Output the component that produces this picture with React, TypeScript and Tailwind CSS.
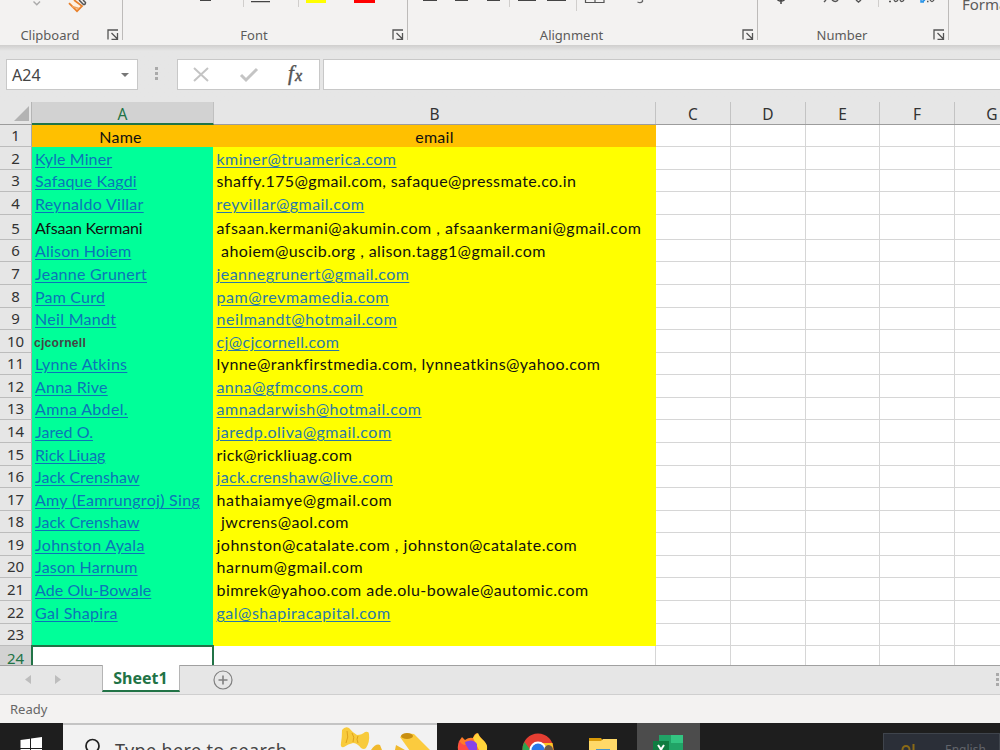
import { ReactNode } from 'react';

interface Row {
  name: string;
  email: string;
  height: string;
  // letter spacing of the two cells
  nt: string;
  et: string;
  nameLink?: boolean;
  emailLink?: boolean;
  small?: boolean;
}

const H22 = 'h-[22px]';
const H23 = 'h-[23px]';
const H25 = 'h-[25px]';

const rows: Row[] = [
  { name: 'Kyle Miner', email: 'kminer@truamerica.com', height: H23, nt: 'tracking-[0.1px]', et: 'tracking-[0.45px]', nameLink: true, emailLink: true },
  { name: 'Safaque Kagdi', email: 'shaffy.175@gmail.com, safaque@pressmate.co.in', height: H22, nt: 'tracking-[0.15px]', et: 'tracking-[0.38px]', nameLink: true },
  { name: 'Reynaldo Villar', email: 'reyvillar@gmail.com', height: H23, nt: 'tracking-[0.3px]', et: 'tracking-[0.45px]', nameLink: true, emailLink: true },
  { name: 'Afsaan Kermani', email: 'afsaan.kermani@akumin.com , afsaankermani@gmail.com', height: H25, nt: 'tracking-[-0.2px]', et: 'tracking-[0.5px]' },
  { name: 'Alison Hoiem', email: ' ahoiem@uscib.org , alison.tagg1@gmail.com', height: H22, nt: 'tracking-[0.2px]', et: 'tracking-[0.42px]', nameLink: true },
  { name: 'Jeanne Grunert', email: 'jeannegrunert@gmail.com', height: H23, nt: 'tracking-[0.25px]', et: 'tracking-[0.45px]', nameLink: true, emailLink: true },
  { name: 'Pam Curd', email: 'pam@revmamedia.com', height: H23, nt: 'tracking-[0.2px]', et: 'tracking-[0.56px]', nameLink: true, emailLink: true },
  { name: 'Neil Mandt', email: 'neilmandt@hotmail.com', height: H22, nt: 'tracking-[0.3px]', et: 'tracking-[0.56px]', nameLink: true, emailLink: true },
  { name: 'cjcornell', email: 'cj@cjcornell.com', height: H23, nt: 'tracking-[0.3px]', et: 'tracking-[0.35px]', small: true, emailLink: true },
  { name: 'Lynne Atkins', email: 'lynne@rankfirstmedia.com, lynneatkins@yahoo.com', height: H22, nt: 'tracking-[0.3px]', et: 'tracking-[0.43px]', nameLink: true },
  { name: 'Anna Rive', email: 'anna@gfmcons.com', height: H23, nt: 'tracking-[0.2px]', et: 'tracking-[0.42px]', nameLink: true, emailLink: true },
  { name: 'Amna Abdel.', email: 'amnadarwish@hotmail.com', height: H22, nt: 'tracking-[0.35px]', et: 'tracking-[0.56px]', nameLink: true, emailLink: true },
  { name: 'Jared O.', email: 'jaredp.oliva@gmail.com', height: H23, nt: 'tracking-[0.05px]', et: 'tracking-[0.5px]', nameLink: true, emailLink: true },
  { name: 'Rick Liuag', email: 'rick@rickliuag.com', height: H23, nt: 'tracking-[-0.05px]', et: 'tracking-[0.28px]', nameLink: true },
  { name: 'Jack Crenshaw', email: 'jack.crenshaw@live.com', height: H22, nt: 'tracking-[0.03px]', et: 'tracking-[0.33px]', nameLink: true, emailLink: true },
  { name: 'Amy (Eamrungroj) Sing', email: 'hathaiamye@gmail.com', height: H23, nt: 'tracking-[0.3px]', et: 'tracking-[0.56px]', nameLink: true },
  { name: 'Jack Crenshaw', email: ' jwcrens@aol.com', height: H22, nt: 'tracking-[0.03px]', et: 'tracking-[0.42px]', nameLink: true },
  { name: 'Johnston Ayala', email: 'johnston@catalate.com , johnston@catalate.com', height: H23, nt: 'tracking-[0.3px]', et: 'tracking-[0.5px]', nameLink: true },
  { name: 'Jason Harnum', email: 'harnum@gmail.com', height: H22, nt: 'tracking-[0.2px]', et: 'tracking-[0.56px]', nameLink: true },
  { name: 'Ade Olu-Bowale', email: 'bimrek@yahoo.com ade.olu-bowale@automic.com', height: H23, nt: 'tracking-[0.07px]', et: 'tracking-[0.45px]', nameLink: true },
  { name: 'Gal Shapira', email: 'gal@shapiracapital.com', height: H23, nt: 'tracking-[0.3px]', et: 'tracking-[0.5px]', nameLink: true, emailLink: true },
  { name: '', email: '', height: H22, nt: '', et: '' },
];

function Launcher() {
  return (
    <svg className="-mb-px h-3 w-3 shrink-0" viewBox="0 0 12 12" fill="none" stroke="#555" strokeWidth="1.3">
      <path d="M1 10.5V1h10M4.5 4l5.5 5.500M10.5 4v6.300H4.5" />
    </svg>
  );
}

function Group({ label, width, children }: { label: string; width: string; children?: ReactNode }) {
  return (
    <div className={`relative flex h-full shrink-0 items-end ${width}`}>
      {children}
      <div className="flex h-[41px] w-full items-end border-r border-[#bdbbb9] pr-[3px]">
        <span className="-mb-1 flex-1 pr-[7px] text-center text-[13px] leading-[18px] text-[#5c5b5a]">{label}</span>
        <Launcher />
      </div>
    </div>
  );
}

function Ribbon() {
  return (
    <div className="flex h-[45px] shrink-0 overflow-hidden bg-[#f3f2f1] pb-[5px]">
      <Group label="Clipboard" width="w-[123px]">
        <svg className="absolute left-0 top-0 h-4 w-[123px]" viewBox="0 0 123 16" fill="none">
          <path d="M33.5 1.5l3.3 3.3L40 1.5" stroke="#aaa" strokeWidth="1.4" />
          <path d="M69 3.2l8 8 5-5.200L74 0" fill="#fdf0e2" stroke="#e8812b" strokeWidth="1.8" />
          <path d="M72 6.500l7 2" stroke="#f0a25c" strokeWidth="1.6" />
          <path d="M79 0l4.500 4.500q2 .3 2-2L83 0" stroke="#555" strokeWidth="1.5" />
        </svg>
      </Group>
      <Group label="Font" width="w-[285px]">
        <svg className="absolute left-0 top-0 h-4 w-[285px]" viewBox="123 0 285 16">
          <path d="M200 .3h11M251 1.600h19" stroke="#444" strokeWidth="1.4" />
          <path d="M243.500 0v7M298.500 0v7" stroke="#d0cecc" />
          <path d="M306 0h20v3h-20z" fill="#ff0" />
          <path d="M354 0h21v3h-21z" fill="#f00" />
        </svg>
      </Group>
      <Group label="Alignment" width="w-[350px]">
        <svg className="absolute left-0 top-0 h-4 w-[350px]" viewBox="408 0 350 16" fill="none">
          <path d="M423 .3h14M455 .3h13M487 .3h13M518 .3h18M547 .3h19" stroke="#444" strokeWidth="1.4" />
          <path d="M509.500 0v7M576.500 0v11" stroke="#d0cecc" />
          <path d="M585.500 0v2.500h18.500v-2.500M595 0v2.500" stroke="#555" strokeWidth="1.2" />
          <path d="M637.500 2q3 1.500 5-.5V0" stroke="#666" strokeWidth="1.3" />
        </svg>
      </Group>
      <Group label="Number" width="w-[191px]">
        <svg className="absolute left-0 top-0 h-4 w-[191px]" viewBox="758 0 191 16" fill="none">
          <path d="M777.500 0q3.500 2.500 7 0M781 0v4" stroke="#444" strokeWidth="1.5" />
          <path d="M826 0l-2 2M832 0q3.500 3 6 0M856 0l2.500 2 2.500-2" stroke="#555" strokeWidth="1.4" />
          <path d="M878.500 0v7" stroke="#d0cecc" />
          <path d="M889 1.500h2M894 0q1.500 3 4 0M900 0q1.500 3 4 0M927 1.500h1.500M930 0q2 3 4 0" stroke="#555" strokeWidth="1.3" />
          <path d="M921 2l4-2M921 0v2h3" stroke="#2b95e8" strokeWidth="1.5" />
        </svg>
      </Group>
      <div className="-mt-[6px] ml-[13px] whitespace-nowrap text-[15px] leading-5 text-[#5c5b5a]">Format</div>
    </div>
  );
}

function FormulaBar() {
  return (
    <div className="flex h-[57px] shrink-0 bg-linear-to-b from-[#cfcecd] to-[#e6e6e6] to-[6px] pt-[14px]">
      <div className="ml-[6px] flex h-[31px] w-[132px] items-center justify-between border border-[#c8c8c8] bg-white pl-[5px] pr-2 text-[16px] text-[#444]">
        A24
        <svg className="h-1 w-2" viewBox="0 0 8 4"><path d="M0 0h8L4 4z" fill="#777" /></svg>
      </div>
      <svg className="ml-[16px] mt-[7px] h-4 w-[5px]" viewBox="0 0 5 16" fill="#aaa">
        <path d="M1 1h3v3H1zM1 6h3v3H1zM1 11h3v3H1z" />
      </svg>
      <div className="ml-[18px] flex h-[31px] w-[143px] border border-[#c8c8c8] bg-white">
        <svg className="h-[29px] w-[140px]" viewBox="0 0 140 29" fill="none">
          <path d="M16 8l14 13M30 8L16 21" stroke="#c4c4c4" strokeWidth="2" />
          <path d="M63 15l5 5 11-11" stroke="#c4c4c4" strokeWidth="3" />
          <text x="110" y="20" fontFamily="Liberation Serif, serif" fontStyle="italic" fontSize="21" fill="#555" stroke="#555" strokeWidth=".4">f</text>
          <text x="117" y="20.500" fontFamily="Liberation Serif, serif" fontStyle="italic" fontSize="16" fill="#555" stroke="#555" strokeWidth=".5">x</text>
        </svg>
      </div>
      <div className="ml-[3px] h-[31px] flex-1 border border-r-0 border-[#c8c8c8] bg-white" />
    </div>
  );
}

const EMPTY = ['C', 'D', 'E', 'F', 'G'];
const emptyWidth = ['w-[75px]', 'w-[75px]', 'w-[74px]', 'w-[75px]', 'w-[75px]'];

function ColumnHeaders() {
  return (
    <div className="flex h-[23px] shrink-0 border-b border-[#9c9c9c] bg-[#e6e6e6] text-[15.5px] leading-[24px] text-[#333]">
      <div className="flex w-[32px] shrink-0 items-end justify-end border-r border-[#b5b5b5] pb-[3px] pr-[2px]">
        <svg className="h-[15px] w-[15px]" viewBox="0 0 15 15"><path d="M15 0v15H0z" fill="#b3b3b3" /></svg>
      </div>
      <div className="-mb-px w-[182px] shrink-0 border-b-2 border-r border-b-[#217346] border-r-[#c0c0c0] bg-[#d2d2d2] text-center text-[#217346]">A</div>
      <div className="w-[442px] shrink-0 border-r border-[#c3c3c3] text-center">B</div>
      {EMPTY.map((c, i) => (
        <div key={c} className={`shrink-0 border-r border-[#c3c3c3] text-center ${emptyWidth[i]}`}>{c}</div>
      ))}
    </div>
  );
}

function RowNumber({ n }: { n: number }) {
  return (
    <div className="flex w-[32px] shrink-0 items-end justify-center border-b border-r border-b-[#bcbcbc] border-r-[#a8a8a8] bg-[#e6e6e6] font-['Noto_Sans'] text-[15px] leading-[22px] tracking-normal text-[#333]">
      {n}
    </div>
  );
}

function EmptyCells() {
  return (
    <>
      {EMPTY.map((c, i) => (
        <div key={c} className={`shrink-0 border-b border-r border-[#d6d6d6] ${emptyWidth[i]}`} />
      ))}
    </>
  );
}

function Sheet() {
  return (
    <div className="h-[540px] shrink-0 overflow-hidden bg-white font-[Lato] text-[16px] leading-[23px] tracking-[0.3px] text-[#111]">
      <div className="flex h-[22px]">
        <RowNumber n={1} />
        <div className="w-[181px] shrink-0 bg-[#ffc000] pr-1 text-center">Name</div>
        <div className="w-[443px] shrink-0 bg-[#ffc000] text-center">email</div>
        <EmptyCells />
      </div>
      {rows.map((r, i) => (
        <div key={i} className={`flex ${r.height}`}>
          <RowNumber n={i + 2} />
          <div className={`flex w-[181px] shrink-0 items-end bg-[#00ff99] ${r.small ? 'pl-[2px]' : 'pl-[3px]'} ${r.height === H25 ? 'pb-px' : ''}`}>
            <span className={`whitespace-pre ${r.nt} ${r.small ? "font-['Liberation_Sans'] text-[12px] font-bold leading-[19px] text-[#444]" : ''} ${r.nameLink ? 'text-[#0b74b8] underline underline-offset-2' : ''}`}>{r.name}</span>
          </div>
          <div className={`flex w-[443px] shrink-0 items-end bg-[#ffff00] pl-[3.5px] ${r.height === H25 ? 'pb-px' : ''}`}>
            <span className={`whitespace-pre ${r.et} ${r.emailLink ? 'text-[#2a78a8] underline underline-offset-2' : ''}`}>{r.email}</span>
          </div>
          <EmptyCells />
        </div>
      ))}
      <div className="flex h-[23px]">
        <div className="w-[31px] shrink-0 bg-[#d2d2d2] text-center font-['Noto_Sans'] text-[15px] leading-[24px] tracking-normal text-[#217346]">24</div>
        <div className="-mt-px w-[183px] shrink-0 border-2 border-[#217346]" />
        <div className="w-[442px] shrink-0 border-r border-[#d6d6d6]" />
        <EmptyCells />
      </div>
    </div>
  );
}

function SheetTabs() {
  return (
    <div className="flex h-[30px] shrink-0 border-b border-t border-b-[#cfcfcf] border-t-[#a0a0a0] bg-[#e6e6e6]">
      <svg className="h-7 w-[102px] shrink-0" viewBox="0 0 102 28" fill="#bdbdbd">
        <path d="M31 9v9l-6-4.500zM55 9v9l6-4.500z" />
      </svg>
      <div className="-mt-px h-[27px] w-[78px] shrink-0 border-x border-b-2 border-x-[#b5b5b5] border-b-[#217346] bg-white pr-px text-center text-[16px] font-bold leading-[26px] text-[#217346]">Sheet1</div>
      <svg className="ml-[33px] mt-[4px] h-5 w-5" viewBox="0 0 20 20" fill="none" stroke="#808080">
        <circle cx="10" cy="10" r="9" strokeWidth="1.200" />
        <path d="M10 5.500v9M5.500 10h9" strokeWidth="1.600" />
      </svg>
      <svg className="ml-auto mt-[6px] h-4 w-[4px]" viewBox="0 0 4 16" fill="#aaa">
        <path d="M0 1h3v3H0zM0 6h3v3H0zM0 11h3v3H0z" />
      </svg>
    </div>
  );
}

function Taskbar() {
  return (
    <div className="flex h-[27px] shrink-0 overflow-hidden bg-[#1e1e1e]">
      <svg className="h-[27px] w-[63px] shrink-0" viewBox="0 0 63 27" fill="#fff">
        <path d="M20.500 17l9.500-1.300V25h-9.500zM31 15.600L42 14v11H31zM20.500 26H30v4h-9.500zM31 26h11v4H31z" />
      </svg>
      <div className="flex h-[40px] w-[374px] shrink-0 border-t-2 border-[#c4c4c4] bg-[#f2f2f2]">
        <svg className="ml-[19px] mt-[13px] h-5 w-5 shrink-0" viewBox="0 0 20 20" fill="none" stroke="#222" strokeWidth="1.700">
          <circle cx="10.500" cy="8" r="6.500" />
          <path d="M6.500 13l-5 6" />
        </svg>
        <span className="ml-[13px] mt-[13px] w-[222px] shrink-0 whitespace-nowrap text-[18px] leading-6 tracking-[0.35px] text-[#444]">Type here to search</span>
        <svg className="h-[25px] w-[100px] shrink-0" viewBox="337 725 100 25">
          <path d="M342 730q3-4 7-2 4 5 8 7 5 0 8-3 4-1 4 2 1 8-3 14-2 2-5 0-4-5-8-5-5 1-9 4-4 1-3-4 1-6 1-13z" fill="#f8cb3c" />
          <path d="M352 733q3 4 1 9M358 736q-2 3 0 7M347 731q2 6-1 12" stroke="#dfa21c" fill="none" />
          <path d="M371 750q5-7 9-5l2 5zM395 750l1-5 9 5z" fill="#f0b92d" />
          <path d="M400 737q5-5 14-3l17 17h-21z" fill="#fbcb3e" />
          <ellipse cx="407" cy="736" rx="6" ry="3" fill="#c98f10" />
        </svg>
      </div>
      <svg className="h-[27px] w-[200px] shrink-0" viewBox="437 723 200 27">
        <path d="M458 750q-1-7 4-13l3 3q4-3 8-2 1-4 4-5l5 6q5 4 5 11z" fill="#ff7a29" />
        <path d="M473 738q2-4 5-5 1 4 5 7 5 4 4 10h-8z" fill="#ffd43a" />
        <path d="M465 742q8-4 12 2v6h-10z" fill="#8544e8" />
        <path d="M459 740q2 5 7 5l3 5h-11z" fill="#ff4a45" />
        <circle cx="538" cy="749" r="15.500" fill="#e43e32" />
        <path d="M524.500 742l6 8h-8q0-5 2-8z" fill="#2da44e" />
        <path d="M540 743h12.500l1 7h-14z" fill="#fdc624" />
        <circle cx="538" cy="750" r="8.500" fill="#fff" />
        <circle cx="538" cy="750" r="6.500" fill="#2878e8" />
        <path d="M544 750q1-5 5-5 4 1 4 5z" fill="#6b5a48" />
        <path d="M589 738h12l2 3h-14z" fill="#d99a08" />
        <path d="M589 741h12l2-2h14v11h-28z" fill="#ffd968" />
        <path d="M596 749h14v1h-14z" fill="#4b97c9" />
      </svg>
      <svg className="h-[27px] w-[63px] shrink-0 bg-[#4c4c4c]" viewBox="637 723 63 27">
        <path d="M659 735h12v15h-12z" fill="#21a366" />
        <path d="M671 735h12v8h-12z" fill="#33c481" />
        <path d="M671 743h12v7h-12z" fill="#21a366" />
        <path d="M653 741h16v9h-16z" fill="#107c41" />
        <path d="M658 745l6 9M664 745l-6 9" stroke="#fff" strokeWidth="2" />
      </svg>
      <div className="ml-auto mt-[10px] flex h-[30px] w-[117px] border border-[#3f444c] bg-[#2b2f38] text-[12px] leading-[31px] text-[#62656b]">
        <svg className="ml-[17px] mt-[9px] h-4 w-[16px]" viewBox="0 0 16 16" fill="none" stroke="#8a6a16" strokeWidth="2">
          <circle cx="5" cy="6.500" r="3.500" />
          <path d="M12.500 1v12" />
        </svg>
        <span className="ml-[28px]">English</span>
      </div>
    </div>
  );
}

export default function App() {
  return (
    <div className="flex h-[750px] w-[1000px] flex-col overflow-hidden bg-[#f3f2f1] font-['Noto_Sans',sans-serif]">
      <Ribbon />
      <FormulaBar />
      <ColumnHeaders />
      <Sheet />
      <SheetTabs />
      <div className="h-[28px] shrink-0 pl-[10px] text-[13px] leading-[29px] text-[#666]">Ready</div>
      <Taskbar />
    </div>
  );
}
